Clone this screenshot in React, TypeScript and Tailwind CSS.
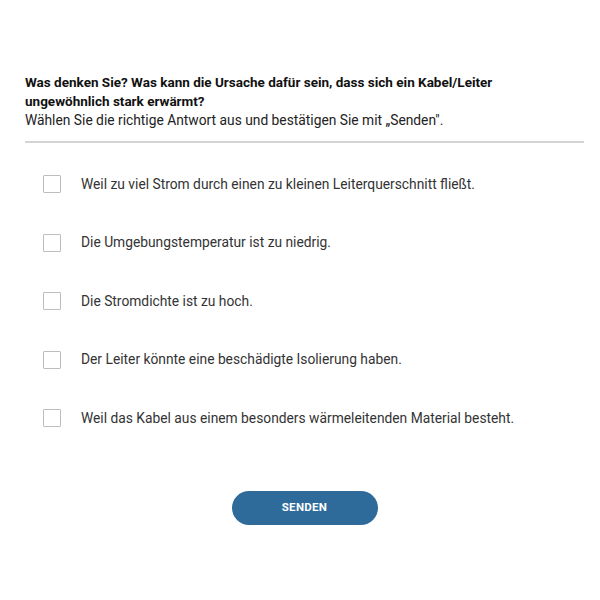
import React from "react";

const options = [
  "Weil zu viel Strom durch einen zu kleinen Leiterquerschnitt fließt.",
  "Die Umgebungstemperatur ist zu niedrig.",
  "Die Stromdichte ist zu hoch.",
  "Der Leiter könnte eine beschädigte Isolierung haben.",
  "Weil das Kabel aus einem besonders wärmeleitenden Material besteht.",
];

export default function App() {
  return (
    <div className="w-[600px] h-[600px] bg-white font-['Roboto',sans-serif] text-[#222]">
      <div className="pl-[25px] pr-[16px] pt-[73px]">
        <div className="text-[13.5px] leading-[19px] font-bold text-[#111]">
          Was denken Sie? Was kann die Ursache dafür sein, dass sich ein Kabel/Leiter
          <br />
          ungewöhnlich stark erwärmt?
        </div>
        <div className="text-[13.8px] leading-[19px] text-[#222]">
          Wählen Sie die richtige Antwort aus und bestätigen Sie mit „Senden".
        </div>
        <div className="mt-[11px] h-[2px] bg-[#d4d4d4]" />
        <div className="mt-[12px] flex flex-col">
          {options.map((o) => (
            <div key={o} className="h-[58.5px] flex items-center pl-[18px]">
              <div className="w-[18px] h-[18px] border border-[#bdbdbd] rounded-[1px] bg-white shrink-0" />
              <span className="ml-[20px] text-[13.8px] text-[#333]">{o}</span>
            </div>
          ))}
        </div>
        <div className="mt-[43px] flex justify-center">
          <button className="w-[146px] h-[34px] rounded-full bg-[#2e6b9b] text-white text-[11.5px] font-bold tracking-[0.3px]">
            SENDEN
          </button>
        </div>
      </div>
    </div>
  );
}
